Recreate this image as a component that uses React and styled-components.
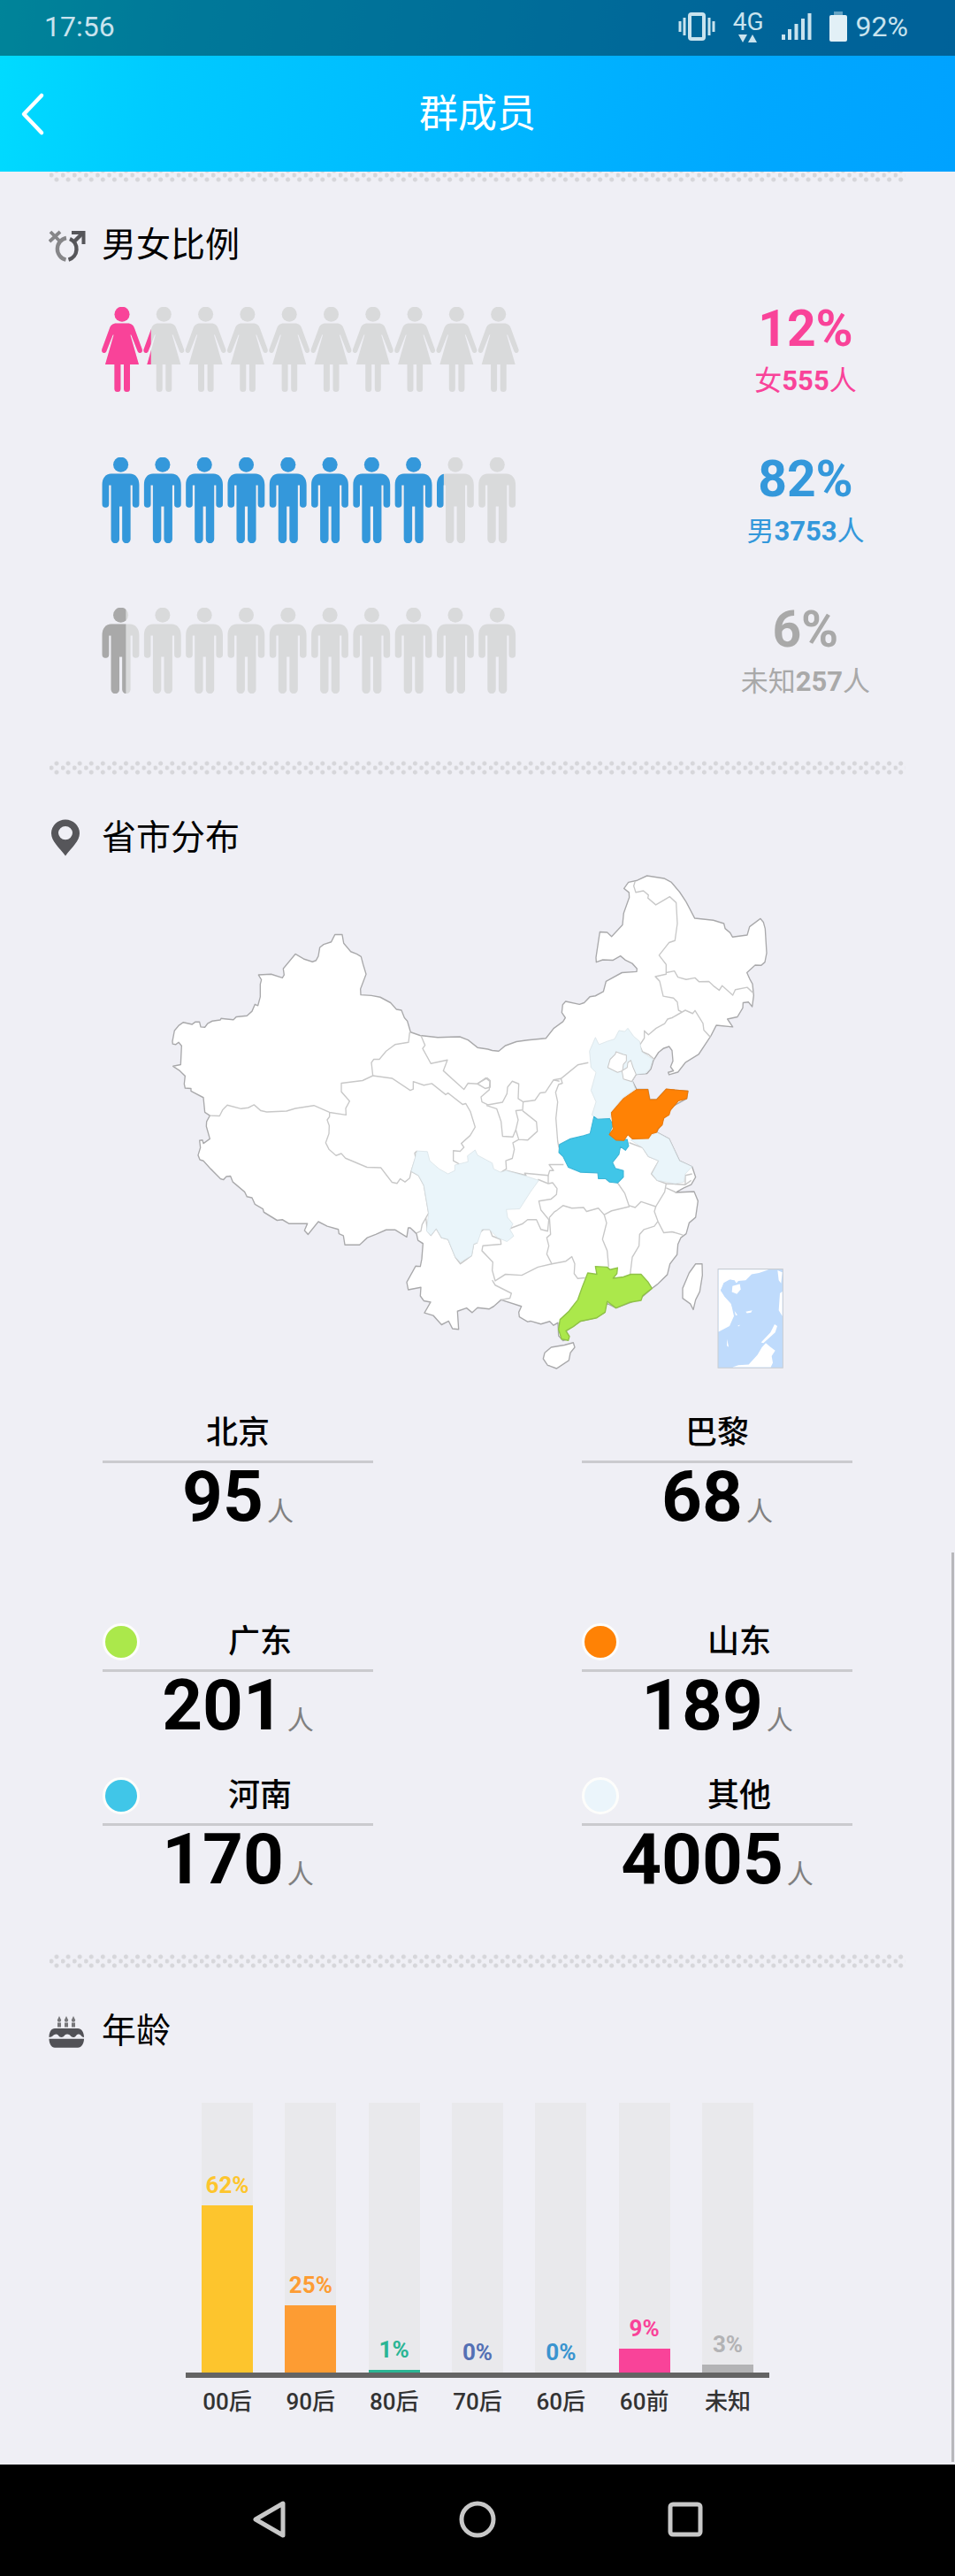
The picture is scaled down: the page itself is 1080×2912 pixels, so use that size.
/* eslint-disable max-len */
/* eslint-disable react/prop-types */
import React from 'react';
import styled, { createGlobalStyle } from 'styled-components';

const GlobalStyle = createGlobalStyle`
  * {
    box-sizing: border-box;
  }

  body {
    margin: 0;
    background-color: #efeff5;
    font-family: Roboto, "Noto Sans CJK SC", sans-serif;
    color: #000;
  }

  svg {
    display: block;
  }
`;

const Screen = styled.div`
  display: flex;
  flex-direction: column;
  min-height: 100vh;
`;

const TopArea = styled.div`
  background: linear-gradient(100deg, #00dcff 0%, #00caff 18%, #00b8ff 50%, #00a8ff 78%, #00a2ff 100%);
`;

const StatusBar = styled.div`
  display: flex;
  justify-content: space-between;
  align-items: center;
  height: 63px;
  padding: 0 53px 4px 50px;
  background-color: rgba(0, 0, 0, 0.4);
  color: #c9e3ee;
  font-size: 32px;
  line-height: 40px;
`;

StatusBar.Icons = styled.div`
  display: flex;
  align-items: center;
  gap: 20px;
`;

StatusBar.Network = styled.div`
  display: flex;
  flex-direction: column;
  align-items: center;
  font-size: 28px;
  line-height: 28px;
`;

StatusBar.Battery = styled.div`
  display: flex;
  align-items: center;
  gap: 10px;
`;

const Header = styled.header`
  display: grid;
  grid-template-columns: 120px 1fr 120px;
  align-items: center;
  height: 131px;
  color: #fff;

  h1 {
    margin: 0;
    font-size: 44px;
    font-weight: 400;
    line-height: 60px;
    text-align: center;
  }
`;

const BackButton = styled.button`
  height: 100%;
  padding: 0 0 0 23px;
  border: 0;
  background: none;
  color: inherit;
`;

const Main = styled.main`
  position: relative;
  flex: 1;
  overflow: hidden;
`;

const Content = styled.div`
  margin-top: -4px;
`;

const ScrollThumb = styled.div`
  position: absolute;
  right: 1px;
  bottom: 3px;
  width: 3px;
  height: 1028px;
  background-color: #b7b7bb;
`;

const Divider = styled.div`
  height: 16px;
  margin: 0 56px;
  background-image:
    radial-gradient(circle at 2px 8px, #d6d6da 2px, transparent 3px),
    radial-gradient(circle at 8px 3px, #d6d6da 2px, transparent 3px),
    radial-gradient(circle at 8px 13px, #d6d6da 2px, transparent 3px);
  background-size: 13px 16px;
  background-repeat: round no-repeat;
`;

const Section = styled.section`
  padding: 42px 0 ${({ $bottom }) => $bottom}px;
`;

Section.Header = styled.header`
  display: flex;
  align-items: center;
  gap: 18px;
  padding-left: 55px;

  h2 {
    margin: 0;
    font-size: 39px;
    font-weight: 400;
    line-height: 58px;
  }
`;

const GenderList = styled.div`
  display: flex;
  flex-direction: column;
  gap: 52px;
  padding: 36px 96px 0 114px;
`;

const GenderRow = styled.div`
  display: flex;
  justify-content: space-between;
  align-items: center;
  color: ${({ $color }) => $color};
`;

GenderRow.Figures = styled.svg`
  flex: 0 1 473px;
  margin-bottom: 12px;
`;

GenderRow.Text = styled.div`
  min-width: 146px;
  text-align: center;
  line-height: 59px;
`;

GenderRow.Percent = styled.div`
  font-size: 57px;
  font-weight: 700;
`;

GenderRow.Count = styled.div`
  font-size: 31px;
  font-weight: 400;

  b {
    font-weight: 700;
  }
`;

const MapBox = styled.div`
  display: flex;
  justify-content: center;
  padding-top: 4px;
`;

const StatGrid = styled.div`
  display: grid;
  grid-template-columns: 1fr 1fr;
  gap: 40px 236px;
  padding: 0 116px;
  margin-top: ${({ $top }) => $top}px;
`;

const Stat = styled.div`
  text-align: center;
`;

Stat.Title = styled.div`
  display: flex;
  align-items: center;
  gap: 8px;
  padding-bottom: 7px;
  border-bottom: 3px solid #cacace;
  font-size: 36px;
  font-weight: 500;
  line-height: 48px;

  span {
    flex: 1;
  }
`;

Stat.Dot = styled.i`
  width: 42px;
  height: 42px;
  border: 3px solid #fdfdfb;
  border-radius: 50%;
  background-color: ${({ $color }) => $color};
`;

Stat.Value = styled.div`
  display: flex;
  justify-content: center;
  align-items: baseline;
  gap: 4px;
  font-size: 80px;
  font-weight: 700;
  line-height: 76px;

  small {
    color: #808080;
    font-size: 30px;
    font-weight: 400;
    line-height: 30px;
  }
`;

const Chart = styled.div`
  width: 660px;
  max-width: 100%;
  margin: 52px auto 0;
`;

Chart.Bars = styled.div`
  display: flex;
  justify-content: space-between;
  height: 311px;
  padding: 0 18px;
  border-bottom: 6px solid #646464;
`;

Chart.Track = styled.div`
  display: flex;
  flex-direction: column;
  justify-content: flex-end;
  width: 58px;
  background-color: #e9e9ec;
  color: ${({ $color }) => $color};
  font-size: 26px;
  font-weight: 700;
  line-height: 30px;
  text-align: center;
`;

Chart.Fill = styled.div`
  margin-top: 8px;
  background-color: currentColor;
`;

Chart.Labels = styled.div`
  display: flex;
  justify-content: space-between;
  padding: 9px 18px 0;
  color: #333;
  font-size: 26px;
  font-weight: 500;
  line-height: 36px;

  span {
    width: 58px;
    text-align: center;
    white-space: nowrap;
  }
`;

const NavBar = styled.nav`
  display: flex;
  justify-content: center;
  height: 126px;
  padding-bottom: 2px;
  background-color: #000;

  button {
    display: flex;
    justify-content: center;
    align-items: center;
    width: 235px;
    padding: 0;
    border: 0;
    background: none;
  }
`;

const FEMALE = 'M18 18.5H30C35 18.5 37 21 38.2 24.5L46.8 48C47.8 52 43.2 53.6 41.6 50L34.3 31.5H33.4L43 65H33V92.6A3.5 3.5 0 0 1 26 92.6V65H22.4V92.6A3.5 3.5 0 0 1 15.4 92.6V65H5L14.6 31.5H13.7L6.4 50C4.8 53.6 .2 52 1.2 48L9.8 24.5C11 21 13 18.5 18 18.5Z';
const MALE = 'M12 18.5H32.6C39.6 18.5 43.4 24 43.4 31V53A3.8 3.8 0 0 1 35.8 53V31.5H33.6V92.5A4.7 4.7 0 0 1 24.2 92.5V55.5H21V92.5A4.7 4.7 0 0 1 11.6 92.5V31.5H9.2V53A3.8 3.8 0 0 1 1.6 53V31C1.6 24 5 18.5 12 18.5Z';

const genders = [
  { id: 'female', name: '女', count: 555, percent: 12, color: '#f94399', shape: FEMALE, headX: 24 },
  { id: 'male', name: '男', count: 3753, percent: 82, color: '#3498db', shape: MALE, headX: 22.6 },
  { id: 'unknown', name: '未知', count: 257, percent: 6, color: '#a9a9a9', shape: MALE, headX: 22.6 },
];

const cities = [
  { name: '北京', count: 95 },
  { name: '巴黎', count: 68 },
];

const provinces = [
  { name: '广东', count: 201, color: '#abe84b' },
  { name: '山东', count: 189, color: '#ff8205' },
  { name: '河南', count: 170, color: '#40c6e8' },
  { name: '其他', count: 4005, color: '#ebf5fb' },
];

const ages = [
  { name: '00后', percent: 62, color: '#fdc52d' },
  { name: '90后', percent: 25, color: '#fd9c33' },
  { name: '80后', percent: 1, color: '#2bb594' },
  { name: '70后', percent: 0, color: '#5470b4' },
  { name: '60后', percent: 0, color: '#3a94cf' },
  { name: '60前', percent: 9, color: '#f94399' },
  { name: '未知', percent: 3, color: '#b3b3b5' },
];

const slots = [...Array(10).keys()];

const People = ({ shape, headX, fill }) => (
  <g fill={fill}>
    {slots.map((slot) => (
      <g key={slot} transform={`translate(${slot * 47.3})`}>
        <circle cx={headX} cy="8.2" r="8.5" />
        <path d={shape} />
      </g>
    ))}
  </g>
);

const GenderIcon = () => (
  <svg width="42" height="42" viewBox="0 0 42 42" fill="none" strokeWidth="4.4">
    <path d="M20 13A12.6 12.6 0 0 0 19.500 37.6" stroke="#868689" />
    <path d="M2 6L14 18M13 6L1 17" stroke="#868689" strokeWidth="3.8" />
    <path d="M24 14A12.6 12.6 0 0 1 22.500 37.6M28 18L38 8" stroke="#56565a" />
    <path d="M26 7H39.5V20" stroke="#56565a" strokeWidth="4" />
  </svg>
);

const PinIcon = () => (
  <svg width="42" height="42" viewBox="0 0 42 42">
    <path fill="#56565a" fillRule="evenodd" d="M19 .5A16 15.6 0 0 0 3 16C3 25 12 32 19 41.5C26 32 35 25 35 16A16 15.6 0 0 0 19 .5ZM19 8A8 7.6 0 1 1 19 23.2A8 7.6 0 1 1 19 8Z" />
  </svg>
);

const CakeIcon = () => (
  <svg width="42" height="42" viewBox="0 0 42 42" fill="#515156">
    <path fill="#77777a" d="M12 4L14.2 8.5A2.2 2.2 0 0 1 9.8 8.5ZM20 4L22.2 8.5A2.2 2.2 0 0 1 17.8 8.5ZM28 4L30.2 8.5A2.2 2.2 0 0 1 25.8 8.5ZM10 11.5H14V16.5H10ZM18 11.5H22V16.5H18ZM26 11.5H30V16.5H26Z" />
    <path d="M7 18H33C37 18 40 22 40 28C37 28 37 25 34 24.5C31.5 24 31 28 28 28C25 28 24.5 24.5 21 24.5C18 24.5 17.5 28 14.5 28C11.500 28 11 24.500 8.500 24.500C5.500 24.500 4.500 28 .5 28C.5 22 3 18 7 18Z" />
    <path d="M.5 29.800H40C40 35 37 39.800 33 39.800H7C3 39.800 .5 35 .5 29.800Z" />
  </svg>
);

const ChinaMap = () => (
  <svg width="720" height="570" viewBox="0 27 2160 1541" preserveAspectRatio="none" strokeLinejoin="round" role="img" aria-label="省市分布">
    {/* mainland outline */}
    <path
      fill="#fff"
      stroke="#a9a9ab"
      strokeWidth="4"
      d="M45 560L52 527L66 512L82 502L112 508L122 501L137 501L141 516L155 517L164 506L180 498L207 495L210 490L252 494L262 485L298 482L315 468L325 447L335 451L343 424L343 385L347 372L337 357L380 355L418 366L424 357L421 338L462 293L490 308L520 317L532 313L540 300L545 273L558 264L584 256L596 234L621 234L626 260L650 286L670 293L685 301L692 325L702 355L683 400L684 418L720 420L750 425L785 442L805 462L822 465L832 488L842 498L853 532L885 542L945 548L1020 546L1048 556L1080 579L1115 584L1130 588L1152 590L1175 573L1212 561L1250 556L1312 551L1338 521L1370 500L1378 488L1366 472L1369 448L1379 438L1426 447L1442 442L1461 424L1480 421L1507 408L1516 377L1570 350L1620 347L1621 338L1605 322L1582 312L1565 299L1540 312L1505 311L1483 318L1482 304L1495 226L1520 227L1535 240L1572 204L1576 168L1595 120L1594 105L1577 93L1592 74L1622 68L1655 54L1713 62L1738 74L1766 104L1788 134L1817 184L1880 190L1916 200L1920 215L1937 228L1945 241L1995 235L2003 210L2040 185L2050 196L2056 216L2061 290L2055 318L2042 328L2022 327L1994 350L2004 370L2013 385L2017 420L2012 454L1999 440L1981 442L1980 458L1962 485L1928 492L1946 516L1890 511L1872 543L1830 600L1785 625L1760 654L1730 662L1727 655L1745 650L1735 638L1743 620L1740 588L1730 576L1710 582L1694 594L1677 618L1668 645L1655 658L1618 661L1605 680L1620 707L1658 707L1665 738L1687 738L1720 707L1794 712L1790 735L1745 757L1712 795L1688 838L1730 858L1765 925L1808 943L1820 975L1805 998L1780 1008L1752 1022L1815 1019L1828 1048L1820 1098L1798 1115L1788 1148L1770 1160L1760 1180L1757 1212L1733 1240L1724 1273L1690 1303L1672 1315L1640 1340L1600 1358L1550 1375L1518 1360L1510 1390L1480 1405L1430 1415L1380 1445L1390 1468L1370 1475L1355 1460L1353 1420L1338 1428L1325 1416L1295 1424L1260 1415L1250 1417L1222 1402L1220 1388L1229 1370L1160 1350L1135 1370L1120 1378L1080 1374L1062 1389L1043 1375L1012 1385L1016 1440L995 1438L982 1415L958 1426L930 1398L900 1390L921 1357L898 1353L886 1338L888 1312L845 1319L840 1296L870 1247L886 1248L891 1225L895 1178L878 1168L873 1148L852 1130L845 1130L840 1158L800 1136L770 1136L735 1150L706 1160L680 1182L630 1182L625 1154L610 1148L608 1135L570 1125L540 1111L505 1150L493 1138L503 1117L440 1117L418 1105L400 1107L355 1082L352 1072L325 1058L315 1038L298 1035L290 1020L250 990L242 972L228 973L218 983L208 980L175 950L150 925L138 922L132 908L140 885L137 863L147 862L150 872L172 858L160 820L161 805L172 787L155 777L150 732L108 712L108 704L88 703L85 690L88 666L70 650L47 636L73 631L76 574L66 563L56 570L46 568Z"
    />

    <g fill="none" stroke="#c8c8c8" strokeWidth="4">
      {/* western provinces */}
      <path d="M172 787L205 788L215 770L231 755L278 766L302 763L322 754L345 772L365 776L432 773L462 765L525 756L578 777L634 785L633 765L646 743L618 714L618 688L690 680L725 665L720 625L728 615L747 615L770 590L800 570L846 563L850 532" />
      <path d="M578 777L578 790L570 800L577 818L576 842L565 870L576 890L600 909L618 903L632 917L705 945L752 946L790 991L807 994L818 980L834 990L850 978L855 957L870 915L867 902L875 895" />
      <path d="M725 665L790 673L852 710L862 706L862 683L898 694L925 689L972 723L980 718L1030 753L1040 750L1056 775L1072 822L1055 848L1025 872L1034 884L1021 896L998 894L998 925L1018 935" />
      <path d="M888 542L902 572L894 582L922 628L978 617L964 650L1034 707L1048 688L1080 690L1106 704L1123 700L1123 680L1113 672L1080 689" />
      <path d="M855 957L880 970L898 1000L914 1085L892 1120L888 1140L873 1146M905 1100L910 1140L922 1153L940 1132L958 1160L980 1165L1005 1220L1022 1240L1060 1215L1067 1180L1080 1175" />
    </g>

    <g transform="translate(1080)" fill="none" stroke="#c8c8c8" strokeWidth="4">
      {/* north-east */}
      <path d="M535 70L530 85L537 105L563 100L580 113L578 122L605 143L652 118L674 136L678 200L670 252L650 258L616 297L640 325L640 355L603 362L618 376L630 422L665 428L678 440L682 465L693 470" />
      <path d="M640 350L668 345L680 364L708 371L738 366L752 378L785 377L800 390L820 404L830 390L866 419L875 402L915 395L935 412" />
      <path d="M790 547L768 526L765 505L738 466L730 475L705 465L660 488L645 492L635 506L606 520L580 540L566 528L566 550L550 572L560 592L580 600L600 615" />
      {/* Inner Mongolia, Shanxi, Shaanxi */}
      <path d="M376 625L340 632L283 674L258 678L230 716L212 718L195 740L155 745L138 735L140 690L118 682L102 700L100 720L85 746L35 754L15 745L12 730L40 708L42 682L28 672L0 690" />
      <path d="M283 674L288 688L275 692L265 716L272 745L266 795L272 865L276 885M258 678L278 682" />
      <path d="M155 745L153 770L130 772L138 800L130 830L140 860L170 862L203 835L200 806L153 772M30 756L65 766L80 805L85 850L120 852L130 830M140 860L120 870L125 890L118 918L96 925L98 950L80 960" />
      <path d="M98 955L165 970L160 963L240 970L245 955L258 955L243 937L292 937" />
      {/* Chongqing, Guizhou, Hubei, Hunan */}
      <path d="M205 982L240 995L255 992L270 1010L268 1028L250 1042L208 1048L215 1075L242 1105L238 1140L215 1135L200 1105L170 1105L152 1118L110 1132" />
      <path d="M240 970L240 995M244 1098L260 1082L270 1076L290 1062L320 1070L360 1068L370 1080L410 1070L430 1090L455 1078L515 1065L500 1025L475 992" />
      <path d="M430 1090L438 1115L424 1165L440 1200L445 1250M244 1098L248 1150L235 1160L242 1185L235 1210L252 1240L300 1232L320 1218L330 1240L328 1270L340 1285L365 1283" />
      <path d="M252 1240L205 1250L150 1275L95 1272L60 1292L50 1260L52 1235L15 1200L18 1185L80 1180L78 1165L50 1155L42 1135L20 1135L0 1150M50 1290L60 1305L115 1330L110 1345L80 1350" />
      {/* Anhui, Jiangxi, Zhejiang, Fujian */}
      <path d="M515 870L560 885L580 912L615 925L590 965L610 985L640 995L635 1020L605 1065L555 1050L535 1068L515 1062M640 995L705 998L725 985M640 1008L675 1022" />
      <path d="M605 1065L600 1080L612 1110L600 1125L565 1135L550 1150L548 1185L525 1220L518 1272M612 1110L632 1145L660 1142L697 1152" />
      <path d="M705 998L705 970L728 965" />
    </g>

    {/* lightly shaded provinces */}
    <g fill="#eaf5fa" stroke="#d6e0e4" strokeWidth="2">
      <path d="M875 895L910 897L918 925L950 950L980 965L1003 955L1003 938L1048 928L1046 910L1072 892L1080 908L1130 932L1135 950L1158 960L1178 955L1245 972L1288 985L1260 1020L1223 1072L1178 1074L1182 1098L1200 1118L1190 1135L1203 1155L1180 1172L1148 1160L1120 1135L1095 1135L1080 1175L1067 1180L1060 1215L1022 1235L1005 1220L980 1165L958 1160L940 1132L922 1153L907 1140L914 1085L898 1000L880 970L855 957Z" />
      <path d="M1480 548L1492 570L1520 560L1545 553L1560 527L1580 530L1590 520L1610 545L1630 560L1637 592L1675 615L1665 645L1650 658L1618 661L1605 680L1615 705L1570 735L1535 775L1530 796L1482 796L1468 785L1482 745L1465 710L1482 655L1465 640L1460 590Z" />
      <path d="M1600 862L1655 855L1688 838L1730 858L1765 925L1808 943L1785 965L1780 990L1750 995L1690 985L1672 965L1695 925L1660 912L1640 885Z" />
    </g>
    <g fill="#fff" stroke="#c8c8c8" strokeWidth="3">
      <path d="M1530 615L1547 600L1550 592L1575 600L1585 602L1585 620L1575 630L1572 650L1555 655L1522 640Z" />
      <path d="M1590 625L1600 618L1608 640L1618 661L1603 683L1575 675L1570 650L1588 640Z" />
    </g>

    {/* top three provinces */}
    <path fill="#40c6e8" stroke="#3bb4d6" strokeWidth="3" d="M1475 790L1487 798L1528 796L1540 815L1528 840L1560 862L1588 860L1593 880L1582 893L1565 882L1560 905L1538 930L1548 948L1575 955L1575 975L1555 993L1528 990L1515 980L1490 980L1488 962L1430 960L1388 945L1370 912L1356 900L1358 875L1395 858L1440 848L1462 842Z" />
    <path fill="#ff8205" stroke="#e8780a" strokeWidth="3" d="M1534 778L1575 735L1618 708L1658 707L1664 738L1688 738L1720 706L1794 712L1790 735L1762 742L1735 770L1730 785L1712 795L1707 815L1692 828L1688 838L1670 843L1660 857L1605 858L1590 845L1577 863L1550 862L1527 845L1540 828Z" />
    <path fill="#abe84b" stroke="#8fc247" strokeWidth="4" d="M1454 1268L1485 1272L1480 1248L1520 1250L1530 1258L1555 1252L1553 1270L1540 1284L1575 1280L1600 1272L1635 1272L1658 1295L1672 1315L1640 1338L1635 1352L1595 1358L1550 1375L1520 1355L1513 1388L1485 1405L1430 1415L1405 1432L1380 1445L1392 1462L1388 1474L1365 1470L1355 1440L1360 1410L1390 1385L1420 1350L1435 1312Z" />

    {/* Hainan and Taiwan */}
    <g fill="#fff" stroke="#a9a9ab" strokeWidth="4">
      <path d="M1375 1488L1405 1481L1410 1495L1395 1512L1390 1535L1365 1550L1348 1560L1325 1552L1318 1550L1303 1530L1308 1512L1330 1495Z" />
      <path d="M1842 1240L1820 1240L1798 1268L1776 1315L1776 1345L1802 1362L1812 1380L1820 1350L1834 1325L1843 1275Z" />
    </g>

    {/* South China Sea inset */}
    <rect x="1896" y="1256" width="220" height="302" fill="#bfdbfc" stroke="#c9cdd2" strokeWidth="3" />
    <g fill="#fff">
      <path d="M1898 1258H2068L2035 1268L2010 1272L1990 1290L1965 1292L1958 1300L1952 1290L1935 1288L1915 1298L1905 1322L1920 1340L1940 1360L1950 1400L1935 1430L1898 1448Z" />
      <path fill="#bfdbfc" d="M1905 1320L1918 1298L1940 1288L1960 1300L1950 1340L1952 1390L1940 1362L1918 1340Z" />
      <path d="M1945 1308L1970 1302L1973 1318L1960 1332L1943 1326Z" />
      <path d="M1990 1386L2012 1382L2008 1389L1994 1391ZM1952 1384L1962 1396L1956 1398ZM2042 1480L2074 1450L2088 1425L2097 1430L2090 1450L2050 1482ZM1927 1470L1932 1494L1926 1490ZM2098 1260L2114 1266L2110 1300L2102 1290ZM2106 1330L2114 1325V1400L2102 1382ZM1962 1430L1970 1426L1968 1431Z" />
      <path d="M1945 1556L1965 1550L2000 1548L2030 1518L2045 1495L2058 1482L2075 1495L2090 1505L2078 1522L2082 1542L2075 1556Z" />
    </g>
  </svg>
);

const StatItem = ({ name, count, color }) => (
  <Stat>
    <Stat.Title>
      {color && <Stat.Dot $color={color} />}
      <span>{name}</span>
    </Stat.Title>
    <Stat.Value>
      {count}
      <small>人</small>
    </Stat.Value>
  </Stat>
);

const App = () => (
  <Screen>
    <GlobalStyle />
    <TopArea>
      <StatusBar>
        <span>17:56</span>
        <StatusBar.Icons>
          <svg width="42" height="32" viewBox="0 0 42 32" fill="none" stroke="currentColor">
            <rect x="13" y="2" width="16" height="28" rx="2" strokeWidth="4" />
            <path d="M2 10V22M7 6V26M35 6V26M40 10V22" strokeWidth="3" />
          </svg>
          <StatusBar.Network>
            4G
            <svg width="22" height="9" viewBox="0 0 22 9" fill="currentColor">
              <path d="M0 0H10L5 9ZM11 9H21L16 0Z" />
            </svg>
          </StatusBar.Network>
          <svg width="34" height="31" viewBox="0 0 34 31" stroke="currentColor" strokeWidth="4">
            <path d="M2 25V31M9 19V31M16.500 13V31M24 7V31M31.500 1V31" />
          </svg>
          <StatusBar.Battery>
            <svg width="20" height="34" viewBox="0 0 20 34" fill="currentColor">
              <rect x="5" width="10" height="5" opacity="0.5" />
              <rect y="4" width="20" height="30" rx="2" fill="#e2f0f6" />
            </svg>
            <span>92%</span>
          </StatusBar.Battery>
        </StatusBar.Icons>
      </StatusBar>
      <Header>
        <BackButton type="button" aria-label="返回">
          <svg width="28" height="50" viewBox="0 0 28 50" fill="none" stroke="currentColor" strokeWidth="4.500" strokeLinecap="round" strokeLinejoin="round">
            <path d="M24 4L4 25L24 46" />
          </svg>
        </BackButton>
        <h1>群成员</h1>
      </Header>
    </TopArea>

    <Main>
      <Content>
        <Divider />
        <Section $bottom={60}>
          <Section.Header>
            <GenderIcon />
            <h2>男女比例</h2>
          </Section.Header>
          <GenderList>
            {genders.map(({ id, name, count, percent, color, shape, headX }) => (
              <GenderRow key={id} $color={color}>
                <GenderRow.Figures viewBox="0 0 473 97">
                  <clipPath id={id}>
                    <rect width={percent * 4.73} height="97" />
                  </clipPath>
                  <People shape={shape} headX={headX} fill="#d9dadb" />
                  <g clipPath={`url(#${id})`}>
                    <People shape={shape} headX={headX} fill="currentColor" />
                  </g>
                </GenderRow.Figures>
                <GenderRow.Text>
                  <GenderRow.Percent>{`${percent}%`}</GenderRow.Percent>
                  <GenderRow.Count>
                    {name}
                    <b>{count}</b>
                    人
                  </GenderRow.Count>
                </GenderRow.Text>
              </GenderRow>
            ))}
          </GenderList>
        </Section>

        <Divider />
        <Section $bottom={69}>
          <Section.Header>
            <PinIcon />
            <h2>省市分布</h2>
          </Section.Header>
          <MapBox>
            <ChinaMap />
          </MapBox>
          <StatGrid $top={46}>
            {cities.map((city) => <StatItem key={city.name} {...city} />)}
          </StatGrid>
          <StatGrid $top={102}>
            {provinces.map((province) => <StatItem key={province.name} {...province} />)}
          </StatGrid>
        </Section>

        <Divider />
        <Section $bottom={53}>
          <Section.Header>
            <CakeIcon />
            <h2>年龄</h2>
          </Section.Header>
          <Chart>
            <Chart.Bars>
              {ages.map(({ name, percent, color }) => (
                <Chart.Track key={name} $color={color}>
                  {`${percent}%`}
                  <Chart.Fill style={{ height: `${percent}%` }} />
                </Chart.Track>
              ))}
            </Chart.Bars>
            <Chart.Labels>
              {ages.map(({ name }) => <span key={name}>{name}</span>)}
            </Chart.Labels>
          </Chart>
        </Section>
      </Content>
      <ScrollThumb />
    </Main>

    <NavBar>
      <button type="button" aria-label="返回">
        <svg width="42" height="42" viewBox="0 0 42 42" fill="none" stroke="#c8c8c8" strokeWidth="5" strokeLinejoin="round">
          <path d="M36 3V39L5 21Z" />
        </svg>
      </button>
      <button type="button" aria-label="主页">
        <svg width="42" height="42" viewBox="0 0 42 42" fill="none" stroke="#c8c8c8" strokeWidth="5">
          <circle cx="21" cy="21" r="18" />
        </svg>
      </button>
      <button type="button" aria-label="最近任务">
        <svg width="42" height="42" viewBox="0 0 42 42" fill="none" stroke="#c8c8c8" strokeWidth="5">
          <rect x="4" y="4" width="34" height="34" rx="3" />
        </svg>
      </button>
    </NavBar>
  </Screen>
);

export default App;
